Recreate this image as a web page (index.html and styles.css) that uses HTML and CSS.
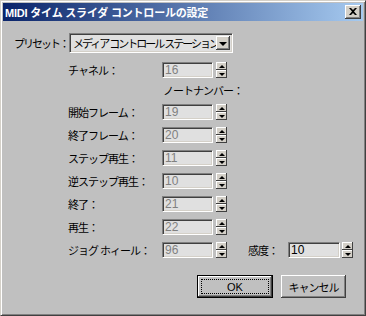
FILE: index.html
```html
<!DOCTYPE html>
<html lang="ja">
<head>
  <meta charset="UTF-8">
  <title>MIDI タイム スライダ コントロールの設定</title>
  <link rel="stylesheet" href="styles.css">
</head>
<body>
  <div class="window">
    <div class="titlebar">
      <span class="title">MIDI タイム スライダ コントロールの設定</span>
      <span class="close">
        <svg width="8" height="7" viewBox="0 0 8 7"><path d="M0 0h2l2 2 2-2h2L5 3.5 8 7H6L4 5 2 7H0l3-3.5z" fill="#000"/></svg>
      </span>
    </div>

    <div class="content">
      <div class="preset">
        <label class="preset-label">プリセット：</label>
        <div class="combo">
          <span class="combo-text">メディア コントロール ステーション</span>
          <span class="combo-btn"></span>
        </div>
      </div>

      <div class="fields">
        <div class="row">
          <label class="lbl">チャネル：</label>
          <input class="num" type="text" value="16" disabled>
          <span class="spin"><span class="up"></span><span class="down"></span></span>
        </div>

        <div class="note">ノートナンバー：</div>

        <div class="row">
          <label class="lbl">開始フレーム：</label>
          <input class="num" type="text" value="19" disabled>
          <span class="spin"><span class="up"></span><span class="down"></span></span>
        </div>
        <div class="row">
          <label class="lbl">終了フレーム：</label>
          <input class="num" type="text" value="20" disabled>
          <span class="spin"><span class="up"></span><span class="down"></span></span>
        </div>
        <div class="row">
          <label class="lbl">ステップ再生：</label>
          <input class="num" type="text" value="11" disabled>
          <span class="spin"><span class="up"></span><span class="down"></span></span>
        </div>
        <div class="row">
          <label class="lbl">逆ステップ再生：</label>
          <input class="num" type="text" value="10" disabled>
          <span class="spin"><span class="up"></span><span class="down"></span></span>
        </div>
        <div class="row">
          <label class="lbl">終了：</label>
          <input class="num" type="text" value="21" disabled>
          <span class="spin"><span class="up"></span><span class="down"></span></span>
        </div>
        <div class="row">
          <label class="lbl">再生：</label>
          <input class="num" type="text" value="22" disabled>
          <span class="spin"><span class="up"></span><span class="down"></span></span>
        </div>
        <div class="row">
          <label class="lbl">ジョグ ホィール：</label>
          <input class="num" type="text" value="96" disabled>
          <span class="spin"><span class="up"></span><span class="down"></span></span>
          <label class="lbl-sens">感度：</label>
          <input class="num num-on" type="text" value="10">
          <span class="spin spin-on"><span class="up"></span><span class="down"></span></span>
        </div>
      </div>

      <div class="buttons">
        <button class="btn btn-default" type="submit"><span>OK</span></button>
        <button class="btn btn-cancel" type="button"><span>キャンセル</span></button>
      </div>
    </div>
  </div>
</body>
</html>
```

FILE: styles.css
```css
body { margin: 0; background: #fff; font-family: "Liberation Sans", "Noto Sans CJK JP", sans-serif; font-size: 11px; color: #000; }
label { white-space: nowrap; }

.window { width: 366px; height: 316px; box-sizing: border-box; background: #c0c0c0; border: 1px solid; border-color: #d4d0c8 #404040 #404040 #d4d0c8; box-shadow: inset 1px 1px #fff, inset -1px -1px #808080; padding: 2px; }

.titlebar { height: 18px; display: flex; align-items: center; justify-content: space-between; padding: 0 2px; background: linear-gradient(to right, #0a246a, #a6caf0); color: #fff; font-weight: bold; font-size: 11px; letter-spacing: -0.2px; }
.close { width: 16px; height: 14px; background: #d4d0c8; box-shadow: inset -1px -1px #404040, inset 1px 1px #fff, inset -2px -2px #808080; display: flex; align-items: center; justify-content: center; }
.close svg { margin-top: -1px; }

.content { padding-top: 12px; }

.preset { display: flex; align-items: center; height: 20px; padding-left: 11px; }
.preset-label { width: 55px; letter-spacing: -2px; }
.combo { width: 164px; height: 20px; box-sizing: border-box; display: flex; align-items: center; background: #e0e0e0; border: 1px solid; border-color: #808080 #fff #fff #808080; box-shadow: inset 1px 1px #404040, inset -1px -1px #d4d0c8; padding: 2px 2px 2px 3px; }
.combo-text { flex: 1; white-space: nowrap; overflow: hidden; letter-spacing: -2px; }
.combo-btn { width: 14px; height: 14px; background: #d4d0c8; box-shadow: inset -1px -1px #404040, inset 1px 1px #fff, inset -2px -2px #808080; display: flex; align-items: center; justify-content: center; }
.combo-btn::after { content: ""; border-left: 4px solid transparent; border-right: 4px solid transparent; border-top: 4px solid #000; margin-top: 1px; }

.fields { padding-left: 65px; margin-top: 9px; }
.row { display: flex; align-items: center; height: 16px; margin-bottom: 7px; }
.lbl { width: 94px; letter-spacing: -1px; }
.note { height: 14px; line-height: 14px; margin: -1px 0 6px 95px; letter-spacing: -1px; white-space: nowrap; }

.num { width: 51px; height: 16px; box-sizing: border-box; margin: 0; padding: 0 2px; background: #e0e0e0; color: #808080; font: 12px "Liberation Sans", sans-serif; border: 1px solid; border-color: #808080 #fff #fff #808080; box-shadow: inset 1px 1px #404040, inset -1px -1px #d4d0c8; outline: none; }
.num-on { width: 52px; color: #000; }

.spin { width: 11px; height: 16px; margin-left: 3px; display: flex; flex-direction: column; }
.spin span { flex: 1; background: #d4d0c8; box-shadow: inset -1px -1px #404040, inset 1px 1px #fff; display: flex; align-items: center; justify-content: center; }
.spin .up::after { content: ""; border-left: 3px solid transparent; border-right: 3px solid transparent; border-bottom: 3px solid #000; }
.spin .down::after { content: ""; border-left: 3px solid transparent; border-right: 3px solid transparent; border-top: 3px solid #000; }
.spin-on { margin-left: 2px; }

.lbl-sens { width: 40px; margin-left: 21px; letter-spacing: -1px; }

.buttons { display: flex; justify-content: flex-end; gap: 8px; padding-right: 17px; margin-top: 17px; }
.btn { height: 23px; box-sizing: border-box; margin: 0; padding: 0; background: #c0c0c0; font: 11px "Liberation Sans", "Noto Sans CJK JP", sans-serif; color: #000; border: none; box-shadow: inset -1px -1px #404040, inset 1px 1px #fff, inset -2px -2px #808080; display: flex; }
.btn span { flex: 1; display: flex; align-items: center; justify-content: center; }
.btn-default { width: 76px; border: 1px solid #000; }
.btn-default span { margin: 3px; border: 1px dotted #000; }
.btn-cancel { width: 65px; letter-spacing: -1px; }
```
